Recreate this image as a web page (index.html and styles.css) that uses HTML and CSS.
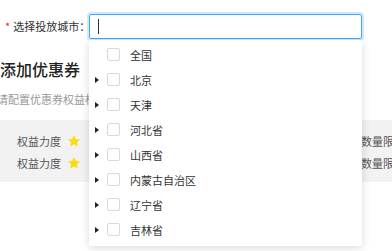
FILE: index.html
```html
<!DOCTYPE html>
<html lang="zh">
<head>
  <meta charset="UTF-8">
  <title>选择投放城市</title>
  <link rel="stylesheet" href="styles.css">
</head>
<body>
  <div class="form-row">
    <label class="form-label"><span class="required">*</span>选择投放城市：</label>
    <div class="input-box"><span class="cursor"></span></div>
  </div>

  <div class="section">
    <h2 class="section-title">添加优惠券</h2>
    <p class="section-desc">请配置优惠券权益标准及数量限制</p>
    <div class="rights-table">
      <div class="rights-row">
        <div class="rights-cell">权益力度
          <svg class="star" viewBox="0 0 24 24"><path d="M12 1.5l3.2 7 7.3.7-5.5 5 1.6 7.3L12 17.7 5.4 21.5 7 14.2l-5.5-5 7.3-.7z"/></svg>
        </div>
        <div class="rights-cell">数量限制</div>
      </div>
      <div class="rights-row">
        <div class="rights-cell">权益力度
          <svg class="star" viewBox="0 0 24 24"><path d="M12 1.5l3.2 7 7.3.7-5.5 5 1.6 7.3L12 17.7 5.4 21.5 7 14.2l-5.5-5 7.3-.7z"/></svg>
        </div>
        <div class="rights-cell">数量限制</div>
      </div>
    </div>
  </div>

  <ul class="city-dropdown">
    <li class="city-item"><span class="caret empty"></span><span class="checkbox"></span>全国</li>
    <li class="city-item"><span class="caret"></span><span class="checkbox"></span>北京</li>
    <li class="city-item"><span class="caret"></span><span class="checkbox"></span>天津</li>
    <li class="city-item"><span class="caret"></span><span class="checkbox"></span>河北省</li>
    <li class="city-item"><span class="caret"></span><span class="checkbox"></span>山西省</li>
    <li class="city-item"><span class="caret"></span><span class="checkbox"></span>内蒙古自治区</li>
    <li class="city-item"><span class="caret"></span><span class="checkbox"></span>辽宁省</li>
    <li class="city-item"><span class="caret"></span><span class="checkbox"></span>吉林省</li>
  </ul>
</body>
</html>
```

FILE: styles.css
```css
html, body {
  overflow: hidden;
}
body {
  margin: 0;
  font-family: "Noto Sans CJK SC", "Noto Sans", sans-serif;
  font-size: 11px;
  color: #333;
  background: #fff;
}
.form-row {
  display: flex;
  align-items: center;
  padding: 14px 0 0 5px;
  height: 25px;
}
.form-label {
  width: 84px;
  line-height: 25px;
  white-space: nowrap;
}
.required {
  color: #f5222d;
  margin-right: 3px;
}
.input-box {
  box-sizing: border-box;
  width: 273px;
  height: 25px;
  border: 1px solid #40a9ff;
  border-radius: 2px;
  box-shadow: 0 0 0 2px rgba(24, 144, 255, 0.2);
  display: flex;
  align-items: center;
  padding-left: 8px;
}
.cursor {
  width: 1px;
  height: 15px;
  background: #333;
}
.section {
  margin-top: 19px;
}
.section-title {
  margin: 0;
  font-size: 16px;
  line-height: 22px;
  font-weight: 500;
  color: #222;
}
.section-desc {
  margin: 9px 0 0 -3px;
  line-height: 20px;
  color: #999;
  white-space: nowrap;
}
.rights-table {
  margin-top: 11px;
  background: #f2f2f2;
  padding: 10px 0 8px;
}
.rights-row {
  display: flex;
  height: 22px;
  align-items: center;
  white-space: nowrap;
}
.rights-cell {
  display: flex;
  align-items: center;
  flex-shrink: 0;
  color: #555;
}
.rights-cell:first-child {
  width: 344px;
  padding-left: 17px;
}
.star {
  width: 14px;
  height: 14px;
  margin-left: 6px;
  fill: #fadb14;
}
.city-dropdown {
  position: absolute;
  left: 89px;
  top: 40px;
  width: 273px;
  margin: 0;
  padding: 2px 0 4px;
  list-style: none;
  background: #fff;
  border-radius: 2px;
  box-shadow: 0 2px 8px rgba(0, 0, 0, 0.15);
}
.city-item {
  display: flex;
  align-items: center;
  height: 25px;
  padding-left: 6px;
  color: #333;
}
.caret {
  width: 0;
  height: 0;
  border-top: 3px solid transparent;
  border-bottom: 3px solid transparent;
  border-left: 4px solid #222;
  margin-right: 8px;
}
.caret.empty {
  border-left-color: transparent;
}
.checkbox {
  box-sizing: border-box;
  width: 13px;
  height: 13px;
  border: 1px solid #d9d9d9;
  border-radius: 2px;
  margin-right: 10px;
}
```
